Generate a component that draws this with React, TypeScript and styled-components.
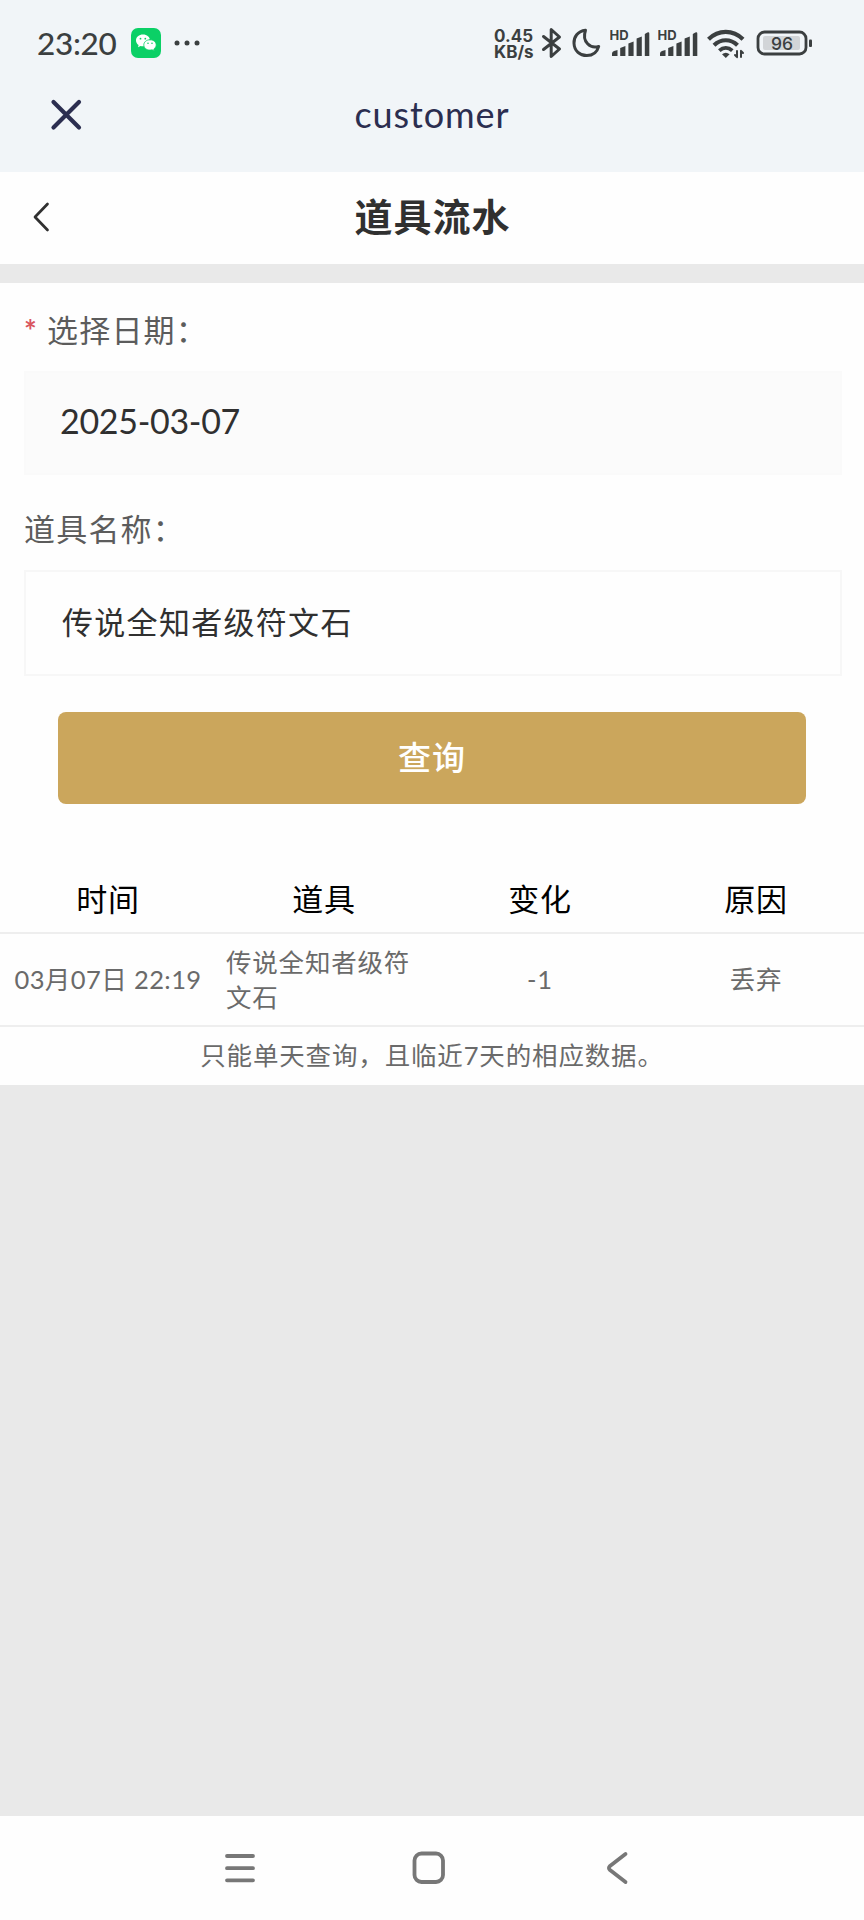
import React from 'react';
import styled, { createGlobalStyle } from 'styled-components';

const GlobalStyle = createGlobalStyle`
  * { box-sizing: border-box; }
  body {
    margin: 0;
    background: #e9e9e9;
    font-family: Lato, 'Noto Sans CJK SC', sans-serif;
  }
`;

const Screen = styled.div`
  width: 864px;
  height: 1920px;
  display: flex;
  flex-direction: column;
  background: #e9e9e9;
  overflow: hidden;
`;

const Header = styled.header`
  height: 172px;
  flex: none;
  background: #f1f5f8;
`;

const StatusBar = styled.div`
  height: 86px;
  padding: 0 51px 0 37px;
  display: flex;
  align-items: center;
  justify-content: space-between;
  color: #3b3f40;
`;

const StatusGroup = styled.div`
  display: flex;
  align-items: center;
`;

const Clock = styled.span`
  width: 94px;
  font-size: 31.5px;
  font-weight: 500;
  line-height: 40px;
  letter-spacing: -0.3px;
  white-space: nowrap;
`;

const Speed = styled.div`
  width: 47px;
  font-family: Inter, sans-serif;
  font-size: 17px;
  font-weight: 700;
  line-height: 16px;
  padding-top: 2px;
  white-space: nowrap;
`;

const Icon = styled.svg<{ $gap?: number }>`
  display: block;
  flex: none;
  margin-left: ${(p) => p.$gap ?? 0}px;
  fill: none;
  stroke-linecap: round;
  stroke-linejoin: round;
`;

const SmallMark = styled.text<{ $size: number; $weight: number }>`
  font-family: Inter, sans-serif;
  font-size: ${(p) => p.$size}px;
  font-weight: ${(p) => p.$weight};
  fill: #3b3f40;
`;

const TitleRow = styled.div<{ $height: number; $side: number }>`
  height: ${(p) => p.$height}px;
  display: grid;
  grid-template-columns: ${(p) => p.$side}px 1fr ${(p) => p.$side}px;
  align-items: center;
`;

const AppTitle = styled.div`
  text-align: center;
  color: #2b2e50;
  font-size: 36px;
  line-height: 44px;
  letter-spacing: 0.9px;
  padding-bottom: 30px;
`;

const PageBar = styled.div`
  flex: none;
  background: #fefefe;
  border-bottom: 19px solid #e9e9e9;
`;

const PageTitle = styled.h1`
  margin: 0;
  text-align: center;
  color: #303030;
  font-size: 38px;
  font-weight: 700;
  line-height: 48px;
  letter-spacing: 1px;
  padding: 0 0 4px 1px;
`;

const IconButton = styled.button<{ $left: number; $lift?: number }>`
  border: 0;
  background: none;
  padding: 0 0 ${(p) => p.$lift ?? 0}px ${(p) => p.$left}px;
`;

const Panel = styled.main`
  flex: none;
  height: 802px;
  background: #fefefe;
`;

const Form = styled.form`
  padding: 24px 22px 0 24px;
  display: flex;
  flex-direction: column;
`;

const Label = styled.label`
  height: 46px;
  display: flex;
  color: #5c5c5c;
  font-size: 31px;
  line-height: 46px;
  letter-spacing: 1.2px;
`;

const Required = styled.span`
  width: 23px;
  color: #d9565e;
  font-size: 30px;
  font-weight: 700;
`;

const Field = styled.div<{ $filled?: boolean; $gap: number; $indent: number }>`
  height: ${(p) => (p.$filled ? 104 : 106)}px;
  margin: 18px 0 ${(p) => p.$gap}px;
  padding: 0 0 5px ${(p) => p.$indent}px;
  display: flex;
  align-items: center;
  color: #303030;
  background: ${(p) => (p.$filled ? '#fbfbfb' : '#fefefe')};
  border: 2px solid ${(p) => (p.$filled ? '#fafafa' : '#f7f7f7')};
  font-size: ${(p) => (p.$filled ? 34 : 31)}px;
  letter-spacing: ${(p) => (p.$filled ? -0.3 : 1.3)}px;
`;

const QueryButton = styled.button`
  height: 92px;
  margin: 0 36px 0 34px;
  padding: 0 0 4px;
  border: 0;
  border-radius: 8px;
  background: #cba65c;
  color: #fff;
  font: 500 33px Lato, 'Noto Sans CJK SC', sans-serif;
  letter-spacing: 1px;
`;

const Table = styled.div`
  margin-top: 63px;
`;

const Row = styled.div<{ $height: number; $head?: boolean }>`
  height: ${(p) => p.$height}px;
  display: grid;
  grid-template-columns: repeat(4, 1fr);
  align-items: center;
  border-bottom: 2px solid #eeeeee;
  color: ${(p) => (p.$head ? '#000' : '#6a6a6a')};
  font-size: ${(p) => (p.$head ? 31 : 25.5)}px;
  letter-spacing: 0.8px;
  line-height: 35px;
`;

const Cell = styled.div<{ $align?: 'left' | 'center'; $tight?: boolean }>`
  text-align: ${(p) => p.$align ?? 'center'};
  padding: ${(p) => (p.$align === 'left' ? '0 16px 0 10px' : '0')};
  letter-spacing: ${(p) => (p.$tight ? '0.4px' : 'inherit')};
  white-space: ${(p) => (p.$align === 'left' ? 'normal' : 'nowrap')};
`;

const Note = styled.p`
  margin: 0;
  text-align: center;
  color: #6a6a6a;
  font-size: 25.5px;
  line-height: 57px;
  letter-spacing: 0.85px;
`;

const NavBar = styled.nav`
  margin-top: auto;
  height: 104px;
  padding: 0 233px 0 222px;
  display: grid;
  grid-template-columns: 189px 1fr 26px;
  align-items: center;
  background: #fefefe;
`;

const INK = '#3b3f40';

const Signal = ({ gap }: { gap: number }) => (
  <Icon $gap={gap} width="40" height="32" viewBox="0 0 40 32">
    <SmallMark $size={13} $weight={700} x="-0.500" y="13">HD</SmallMark>
    <g fill={INK}>
      <path d="M2 26.500q0-2 2-2.500l3.500-1V29H2zM10.200 21l5.200-2V29h-5.200zM18.400 16.500l5.200-2V29h-5.200zM26.600 11.500l5.200-2V29h-5.200zM34.800 7l2.500-1.500q2-.8 2 1V29h-4.500z" />
    </g>
  </Icon>
);

const headings = ['时间', '道具', '变化', '原因'];

export default function App() {
  return (
    <>
      <GlobalStyle />
      <Screen>
        <Header>
          <StatusBar>
            <StatusGroup>
              <Clock>23:20</Clock>
              <Icon width="30" height="30" viewBox="0 0 30 30">
                <rect width="30" height="30" rx="7" fill="#0bd066" />
                <g fill="#fff">
                  <path d="M12 6.500c-4 0-7 2.600-7 5.900 0 1.900 1 3.500 2.600 4.600L7 19.200l2.500-1.300c.8.200 1.600.4 2.500.4C16 18.300 19 15.700 19 12.400S16 6.500 12 6.500z" />
                  <path d="M19 11.700c-3.500 0-6.200 2.300-6.200 5.200s2.700 5.200 6.200 5.200c.7 0 1.400-.1 2.100-.3l2.200 1.200-.5-2c1.500-1 2.400-2.400 2.400-4.100 0-2.900-2.700-5.200-6.200-5.200z" stroke="#0bd066" strokeWidth="0.800" />
                </g>
                <g fill="#0bd066">
                  <circle cx="9.500" cy="10.700" r="0.900" />
                  <circle cx="14.300" cy="10.700" r="0.900" />
                  <circle cx="17" cy="15.300" r="0.800" />
                  <circle cx="21" cy="15.300" r="0.800" />
                </g>
              </Icon>
              <Icon $gap={13} width="26" height="6" viewBox="0 0 26 6">
                <g fill={INK}>
                  <circle cx="3" cy="3" r="2.500" />
                  <circle cx="13" cy="3" r="2.500" />
                  <circle cx="23" cy="3" r="2.500" />
                </g>
              </Icon>
            </StatusGroup>
            <StatusGroup>
              <Speed>
                <div>0.45</div>
                <div>KB/s</div>
              </Speed>
              <Icon width="22" height="32" viewBox="0 0 22 32" stroke={INK} strokeWidth="3">
                <path d="M2.500 9.500 18.500 22l-8.300 7.500v-27L18.500 10 2.500 22.500" />
              </Icon>
              <Icon $gap={9} width="30" height="32" viewBox="0 0 30 32" stroke={INK} strokeWidth="3">
                <path d="M13.500 3.200C5.500 4.200 1.800 10 2 16.200 2.300 24 8 28.600 14.800 28.600c5.800 0 10.300-3.400 11.900-9.200-8 2.700-17.200-4.200-13.200-16.200z" />
              </Icon>
              <Signal gap={8} />
              <Signal gap={8} />
              <Icon $gap={9} width="38" height="32" viewBox="0 0 38 32" stroke={INK} strokeWidth="4.200">
                <g strokeLinecap="butt">
                  <path d="M1.500 12.200c10-9.800 24.500-9.800 34.500 0" />
                  <path d="M7 18.200c7-6.600 16.500-6.600 23.500 0" />
                  <path d="M12.300 23.600c4-3.600 9-3.600 13 0" strokeWidth="3.800" />
                </g>
                <path d="M15 27.300q3.800-3 7.600 0l-3.800 3.600z" fill={INK} stroke="none" />
                <path d="M30 24v6M28 28l2 2.200M34 30v-6M36 26l-2-2.200" strokeWidth="2" />
              </Icon>
              <Icon $gap={11} width="57" height="28" viewBox="0 0 57 28">
                <rect x="7" y="7" width="37" height="14" rx="2" fill="#d2d5d8" />
                <rect x="2" y="3" width="48" height="22" rx="6.500" stroke={INK} strokeWidth="2.800" />
                <rect x="53" y="10.500" width="3" height="7.500" rx="1" fill={INK} />
                <SmallMark $size={17.5} $weight={500} x="26" y="20.500" textAnchor="middle">96</SmallMark>
              </Icon>
            </StatusGroup>
          </StatusBar>
          <TitleRow $height={86} $side={120}>
            <IconButton $left={50} $lift={28} aria-label="close">
              <Icon width="32" height="32" viewBox="0 0 32 32" stroke="#2b2e50" strokeWidth="4.200">
                <path d="M3.500 3l25.500 25.500M29 3L3.500 28.500" />
              </Icon>
            </IconButton>
            <AppTitle>customer</AppTitle>
          </TitleRow>
        </Header>

        <PageBar>
          <TitleRow $height={92} $side={120}>
            <IconButton $left={32} $lift={2} aria-label="back">
              <Icon width="18" height="30" viewBox="0 0 18 30" stroke="#303030" strokeWidth="2.700">
                <path d="M15.500 2L3 15l12.500 13" />
              </Icon>
            </IconButton>
            <PageTitle>道具流水</PageTitle>
          </TitleRow>
        </PageBar>

        <Panel>
          <Form>
            <Label>
              <Required>*</Required>选择日期：
            </Label>
            <Field $filled $gap={31} $indent={34}>2025-03-07</Field>
            <Label>道具名称：</Label>
            <Field $gap={36} $indent={36}>传说全知者级符文石</Field>
            <QueryButton type="button">查询</QueryButton>
          </Form>
          <Table>
            <Row $height={67} $head>
              {headings.map((h) => (
                <Cell key={h}>{h}</Cell>
              ))}
            </Row>
            <Row $height={93}>
              <Cell $tight>03月07日 22:19</Cell>
              <Cell $align="left">传说全知者级符文石</Cell>
              <Cell>-1</Cell>
              <Cell>丢弃</Cell>
            </Row>
            <Note>只能单天查询，且临近7天的相应数据。</Note>
          </Table>
        </Panel>

        <NavBar>
          <Icon width="36" height="36" viewBox="0 0 36 36" stroke="#777" strokeWidth="3.800">
            <path d="M5 6h26M5 18.200h26M5 30.300h26" />
          </Icon>
          <Icon width="36" height="36" viewBox="0 0 36 36" stroke="#777" strokeWidth="3.800">
            <rect x="3.500" y="3.500" width="28.500" height="28.500" rx="7" />
          </Icon>
          <Icon width="26" height="36" viewBox="0 0 26 36" stroke="#777" strokeWidth="3.800">
            <path d="M20.500 4L5 16q-2.200 2 0 4l15.500 12" />
          </Icon>
        </NavBar>
      </Screen>
    </>
  );
}
